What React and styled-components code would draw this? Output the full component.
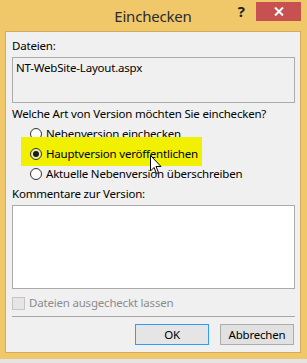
import React from "react";
import styled, { createGlobalStyle } from "styled-components";

const GlobalStyle = createGlobalStyle`
  body {
    margin: 0;
    background: #e4e4e4;
    font-family: "Noto Sans", "Open Sans", sans-serif;
  }
`;

const Window = styled.div`
  position: relative;
  width: 307px;
  height: 359px;
  box-sizing: border-box;
  background: #f0c86a;
  padding: 0 6px 6px 5px;
  display: flex;
  flex-direction: column;
`;

const TitleBar = styled.div`
  height: 31px;
  display: grid;
  grid-template-columns: 1fr auto 1fr;
  align-items: center;
`;

const Title = styled.div`
  grid-column: 2;
  font-size: 15px;
  letter-spacing: -0.2px;
  color: #2b2b2b;
`;

const Controls = styled.div`
  grid-column: 3;
  justify-self: end;
  align-self: start;
  padding-top: 2px;
  display: flex;
  align-items: center;
`;

const Help = styled.span`
  font-weight: bold;
  font-size: 15px;
  line-height: 19px;
  color: #222;
  margin-right: 11px;
`;

const Close = styled.div`
  width: 45px;
  height: 19px;
  background: #c75050;
  display: flex;
  align-items: center;
  justify-content: center;
`;

const Client = styled.div`
  flex: 1;
  border: 1px solid #d2ac5c;
  background: #f0f0f0;
  padding: 6px 5px 0 6px;
  display: flex;
  flex-direction: column;
  font-size: 11.5px;
  letter-spacing: -0.2px;
  line-height: 16px;
  color: #000;
`;

const Label = styled.div`
  margin-top: ${(p) => p.$gap || 0}px;
`;

const FileBox = styled.div`
  margin-top: 3px;
  height: 46px;
  box-sizing: border-box;
  border: 1px solid #ababab;
  padding: 2px 3px;
`;

const RadioList = styled.div`
  padding-left: 18px;
  margin-top: 2px;
`;

const RadioRow = styled.label`
  position: relative;
  height: 20px;
  display: flex;
  align-items: center;
  gap: 4px;

  &::before {
    content: "";
    display: ${(p) => (p.$marked ? "block" : "none")};
    position: absolute;
    left: -9px;
    top: -7px;
    width: 181px;
    height: 29px;
    background: #f0f000;
  }
`;

const Radio = styled.span`
  position: relative;
  width: 12px;
  height: 12px;
  box-sizing: border-box;
  border-radius: 50%;
  border: 1px solid #333;
  background: ${(p) => (p.$on ? "#e8f0a0" : "#fff")};
  display: flex;
  align-items: center;
  justify-content: center;

  &::after {
    content: "";
    display: ${(p) => (p.$on ? "block" : "none")};
    width: 6px;
    height: 6px;
    border-radius: 50%;
    background: #1a1a1a;
  }
`;

const RadioText = styled.span`
  position: relative;
`;

const TextArea = styled.div`
  margin-top: 3px;
  height: 84px;
  box-sizing: border-box;
  border: 1px solid #ababab;
  background: #fff;
`;

const CheckRow = styled.div`
  margin-top: 6px;
  height: 16px;
  display: flex;
  align-items: center;
  gap: 4px;
  color: #8c8c8c;
`;

const Check = styled.span`
  width: 13px;
  height: 13px;
  box-sizing: border-box;
  border: 1px solid #c4c4c4;
  background: #e6e6e6;
`;

const Separator = styled.div`
  margin-top: 5px;
  border-top: 1px solid #a8a8a8;
`;

const Buttons = styled.div`
  margin-top: 7px;
  padding-right: 1px;
  display: flex;
  justify-content: flex-end;
  gap: 11px;
`;

const Button = styled.div`
  width: 74px;
  height: 21px;
  box-sizing: border-box;
  border: 1px solid ${(p) => (p.$default ? "#3399ff" : "#adadad")};
  background: ${(p) => (p.$default ? "#e5e5e5" : "#e1e1e1")};
  display: flex;
  align-items: center;
  justify-content: center;
`;

const Pointer = styled.svg`
  position: absolute;
  left: 150px;
  top: 155px;
`;

const options = [
  { text: "Nebenversion einchecken" },
  { text: "Hauptversion veröffentlichen", on: true },
  { text: "Aktuelle Nebenversion überschreiben" },
];

export default function App() {
  return (
    <>
      <GlobalStyle />
      <Window>
        <TitleBar>
          <Title>Einchecken</Title>
          <Controls>
            <Help>?</Help>
            <Close>
              <svg width="10" height="9" viewBox="0 0 10 9">
                <path d="M1 0.5 L9 8.5 M9 0.5 L1 8.5" stroke="#fff" strokeWidth="2" />
              </svg>
            </Close>
          </Controls>
        </TitleBar>
        <Client>
          <Label>Dateien:</Label>
          <FileBox>NT-WebSite-Layout.aspx</FileBox>
          <Label $gap={3}>Welche Art von Version möchten Sie einchecken?</Label>
          <RadioList>
            {options.map((o) => (
              <RadioRow key={o.text} $marked={o.on}>
                <Radio $on={o.on} />
                <RadioText>{o.text}</RadioText>
              </RadioRow>
            ))}
          </RadioList>
          <Label $gap={2}>Kommentare zur Version:</Label>
          <TextArea />
          <CheckRow>
            <Check />
            Dateien ausgecheckt lassen
          </CheckRow>
          <Separator />
          <Buttons>
            <Button $default>OK</Button>
            <Button>Abbrechen</Button>
          </Buttons>
        </Client>
        <Pointer width="12" height="20" viewBox="0 0 12 20">
          <path
            d="M0.5 0.5 L0.5 16 L4 12.5 L6.5 18.5 L8.5 17.5 L6 11.5 L11 11.5 Z"
            fill="#fff"
            stroke="#000"
            strokeWidth="1"
          />
        </Pointer>
      </Window>
    </>
  );
}
